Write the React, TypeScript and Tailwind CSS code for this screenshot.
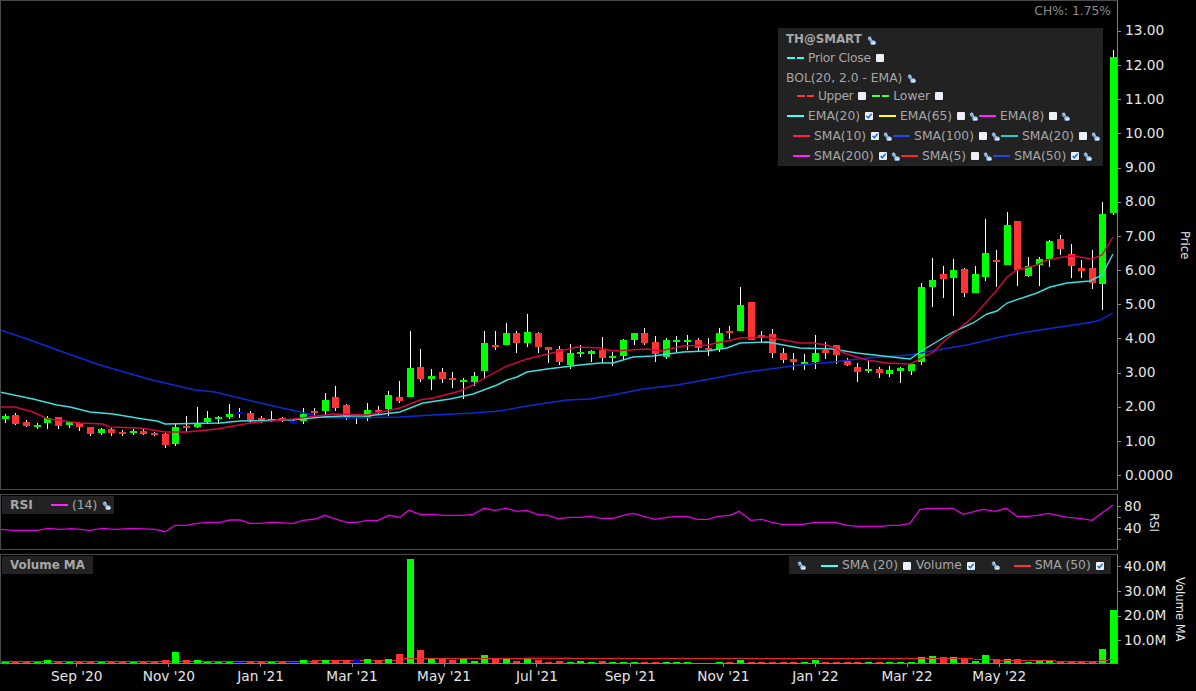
type Candle = [number, number, number, number, string];

// hi, body top, body bottom, lo, colour (page pixels)
const candles: Candle[] = [
  [414, 416, 419, 423, "g"], [413, 415, 424, 425, "r"], [420, 422, 426, 427, "r"], [423, 425, 427, 429, "g"],
  [416, 418, 423, 429, "g"], [417, 417, 426, 429, "r"], [421, 422, 425, 428, "g"], [422, 423, 427, 431, "r"],
  [427, 427, 434, 436, "r"], [428, 429, 433, 435, "g"], [428, 429, 433, 436, "r"], [430, 432, 434, 436, "r"],
  [429, 431, 433, 435, "g"], [429, 431, 434, 435, "r"], [432, 433, 435, 436, "r"], [433, 434, 445, 448, "r"],
  [424, 427, 444, 446, "g"], [416, 426, 428, 432, "r"], [407, 423, 427, 428, "g"], [411, 418, 422, 424, "g"],
  [416, 417, 419, 424, "g"], [404, 414, 417, 419, "g"], [408, 412, 414, 418, "b"], [411, 413, 420, 423, "r"],
  [416, 418, 420, 423, "r"], [411, 419, 420, 422, "g"], [417, 418, 420, 422, "r"], [420, 421, 423, 423, "b"],
  [408, 414, 421, 424, "g"], [408, 411, 413, 415, "r"], [393, 400, 411, 415, "g"], [386, 397, 408, 411, "r"],
  [404, 405, 418, 420, "r"], [417, 417, 418, 424, "b"], [403, 410, 418, 421, "g"], [406, 410, 412, 415, "r"],
  [391, 395, 409, 416, "g"], [381, 397, 401, 403, "r"], [331, 368, 397, 397, "g"], [349, 367, 379, 382, "r"],
  [369, 376, 379, 390, "g"], [368, 372, 379, 383, "r"], [372, 378, 380, 388, "r"], [378, 380, 382, 399, "g"],
  [372, 376, 382, 386, "g"], [331, 343, 371, 379, "g"], [331, 345, 347, 350, "r"], [323, 333, 345, 345, "g"],
  [331, 333, 343, 353, "r"], [314, 332, 343, 347, "g"], [332, 333, 347, 353, "r"], [347, 347, 350, 363, "r"],
  [346, 349, 362, 365, "r"], [344, 353, 365, 369, "g"], [345, 352, 354, 357, "g"], [350, 351, 354, 362, "g"],
  [337, 350, 358, 363, "r"], [352, 356, 358, 366, "g"], [339, 340, 356, 360, "g"], [333, 333, 340, 345, "g"],
  [328, 333, 343, 345, "r"], [336, 342, 354, 362, "r"], [338, 340, 357, 359, "g"], [336, 340, 342, 352, "g"],
  [335, 340, 342, 350, "g"], [338, 340, 348, 351, "r"], [338, 348, 350, 356, "r"], [328, 333, 349, 352, "g"],
  [326, 331, 333, 339, "r"], [287, 305, 331, 331, "g"], [302, 302, 340, 340, "r"], [331, 335, 338, 343, "r"],
  [329, 334, 353, 358, "r"], [348, 353, 360, 363, "r"], [353, 359, 362, 370, "r"], [354, 362, 364, 370, "g"],
  [335, 353, 362, 369, "g"], [342, 350, 353, 359, "r"], [345, 345, 355, 364, "r"], [358, 361, 365, 366, "r"],
  [363, 367, 372, 382, "r"], [360, 369, 371, 373, "g"], [367, 369, 373, 378, "r"], [366, 370, 374, 377, "g"],
  [367, 368, 371, 383, "g"], [363, 364, 371, 375, "g"], [283, 287, 362, 365, "g"], [258, 280, 287, 307, "g"],
  [266, 274, 279, 298, "r"], [259, 270, 278, 316, "g"], [268, 269, 293, 297, "r"], [266, 274, 293, 293, "g"],
  [219, 253, 277, 281, "g"], [250, 260, 262, 287, "r"], [212, 225, 265, 265, "g"], [221, 221, 270, 286, "r"],
  [257, 266, 276, 277, "g"], [257, 259, 265, 286, "g"], [240, 241, 259, 267, "g"], [235, 239, 249, 255, "r"],
  [244, 254, 266, 278, "r"], [260, 268, 271, 278, "r"], [250, 268, 283, 289, "r"], [202, 214, 284, 310, "g"],
  [50, 57, 213, 215, "g"],
];

const volumes = [
  1, 1, 1, 1, 3, 1, 1, 1, 1, 1, 1, 1, 1, 1, 1, 3, 11, 3, 3, 1, 1, 1, 1, 1, 1, 1, 1, 1, 3, 2, 3, 3, 3, 4, 4, 3, 4, 9,
  104, 13, 4, 5, 3, 4, 2, 8, 5, 4, 2, 4, 3, 1, 2, 1, 2, 1, 2, 1, 1, 1, 1, 1, 1, 1, 1, 0, 0, 1, 1, 3, 1, 1, 1, 1, 1, 1,
  3, 1, 1, 1, 1, 1, 1, 1, 1, 1, 6, 7, 6, 6, 4, 2, 8, 4, 4, 4, 1, 2, 2, 1, 1, 1, 1, 14, 53,
];

const blueLine = [[0, 330], [30, 340], [60, 351], [100, 365], [152, 380], [195, 390], [215, 392], [260, 403], [300, 412], [320, 417], [347, 418], [400, 417], [433, 415], [473, 413], [500, 411], [527, 406], [567, 400], [590, 399], [613, 395], [643, 389], [677, 385], [710, 379], [747, 372], [770, 369], [800, 365], [833, 362], [867, 358], [910, 355], [943, 349], [967, 345], [1000, 337], [1027, 332], [1060, 327], [1093, 322], [1100, 320], [1113, 313]];

const cyanLine = [[0, 392], [33, 399], [57, 405], [70, 407], [90, 412], [113, 414], [143, 419], [157, 421], [165, 424], [220, 423], [240, 421], [290, 420], [323, 417], [343, 416], [367, 416], [400, 412], [423, 403], [450, 399], [473, 394], [497, 385], [507, 380], [517, 377], [527, 372], [547, 369], [580, 365], [600, 363], [613, 363], [633, 357], [653, 356], [683, 352], [707, 351], [727, 348], [740, 343], [767, 342], [800, 348], [833, 349], [857, 353], [883, 356], [910, 359], [923, 350], [943, 338], [953, 332], [973, 323], [987, 314], [997, 311], [1007, 303], [1037, 293], [1050, 287], [1067, 283], [1090, 281], [1102, 275], [1113, 254]];

const redLine = [[0, 407], [15, 407], [33, 412], [48, 419], [80, 423], [103, 424], [110, 427], [140, 428], [165, 432], [187, 432], [217, 429], [250, 423], [293, 419], [333, 414], [367, 415], [400, 408], [420, 400], [433, 398], [460, 391], [473, 385], [490, 375], [507, 366], [527, 359], [577, 347], [600, 348], [613, 351], [647, 349], [660, 351], [683, 346], [707, 345], [727, 341], [740, 338], [767, 337], [800, 343], [813, 343], [827, 345], [847, 354], [867, 360], [887, 363], [910, 364], [933, 352], [943, 342], [973, 317], [997, 290], [1007, 277], [1017, 270], [1037, 265], [1047, 260], [1063, 257], [1073, 256], [1092, 259], [1102, 255], [1113, 237]];

const rsiLine = [[0, 529.3], [13, 530.3], [37, 530.3], [48, 528.3], [60, 529.3], [72, 528.7], [90, 530.3], [102, 528.3], [115, 529.3], [133, 528.3], [155, 529.3], [165, 531.7], [175, 525.3], [187, 525.3], [197, 523.3], [208, 522.3], [220, 522.3], [230, 520], [240, 520], [250, 523.3], [260, 523.3], [272, 522.3], [293, 523.3], [303, 520.3], [315, 519], [325, 515.3], [335, 519], [347, 522.3], [357, 522.3], [367, 520.3], [378, 520.3], [389, 515.3], [400, 517.3], [409, 510.3], [420, 514.3], [433, 514.3], [443, 515.3], [463, 515.3], [473, 514.3], [484, 508.3], [495, 510.3], [506, 508.3], [517, 511.3], [527, 510.3], [537, 514.3], [548, 515.3], [558, 518.7], [570, 517.3], [580, 517.3], [590, 516.3], [602, 518.3], [613, 518.3], [623, 515.3], [633, 513.3], [655, 519.3], [667, 517.3], [677, 516.3], [687, 516.3], [697, 519.3], [708, 519.3], [718, 516.3], [730, 515.3], [739, 511.3], [751, 520.3], [762, 519.3], [772, 522.3], [782, 524.3], [803, 524.3], [815, 522.3], [835, 522.3], [847, 525.3], [858, 526.3], [880, 526.3], [890, 525.3], [900, 525.3], [910, 523.3], [920, 509.3], [930, 508.3], [953, 508.3], [963, 514.3], [983, 509.3], [995, 511.3], [1006, 508.3], [1017, 516.3], [1028, 516.3], [1037, 515.3], [1048, 513.3], [1068, 517.3], [1080, 518.3], [1092, 520.3], [1113, 505]];

const volLine = [[0, 661.5], [300, 661.5], [325, 660.5], [363, 660.5], [397, 660], [408, 658.5], [960, 658.5], [1000, 660], [1050, 660], [1058, 661.5], [1095, 661.5], [1113, 659.5]];

const xLabels = [
  { label: "Sep '20", x: 76.7 }, { label: "Nov '20", x: 168.7 }, { label: "Jan '21", x: 261.3 }, { label: "Mar '21", x: 351.3 },
  { label: "May '21", x: 444.3 }, { label: "Jul '21", x: 536.3 }, { label: "Sep '21", x: 631 }, { label: "Nov '21", x: 723 },
  { label: "Jan '22", x: 816.3 }, { label: "Mar '22", x: 906.5 }, { label: "May '22", x: 999.3 },
];

const priceLabels = ["13.00", "12.00", "11.00", "10.00", "9.00", "8.00", "7.00", "6.00", "5.00", "4.00", "3.00", "2.00", "1.00", "0.0000"];
const candleFill: Record<string, string> = { g: "#00ff00", r: "#ff3333", b: "#0000dd" };

const barLeft = (i: number) => Math.round(5.3 + 10.657 * i - 3.5);
const pts = (line: number[][]) => line.map((p) => p.join(",")).join(" ");

function Wrench() {
  return (
    <svg viewBox="0 0 10 10" className="block h-[9px] w-[9px] shrink-0">
      <path d="M1 1 3.8.6 5 2.4 5.4 4.6 8.8 5.2 10 7.4 9 9.8H4.4L3.4 6 1 3.6z" fill="#aed0f4" />
      <path d="M1 1.6 3.6 4.2 4.4 6.6" fill="none" stroke="#2d5c94" strokeWidth="0.9" />
      <path d="M6 7.6H8.6V8.8H6z" fill="#ffffff" />
    </svg>
  );
}

function Box({ checked }: { checked?: boolean }) {
  return (
    <span className="flex h-[8px] w-[8px] shrink-0 items-center justify-center rounded-[1px] bg-[#eeeef8]">
      {checked && (
        <svg viewBox="0 0 8 8" className="h-[8px] w-[8px]">
          <path d="M1.6 4 3.3 5.8 6.6 1.8" fill="none" stroke="#1a6fdc" strokeWidth="1.5" />
        </svg>
      )}
    </span>
  );
}

function Swatch({ color }: { color: string }) {
  return <span className="block h-[2px] w-[17px] shrink-0" style={{ backgroundColor: color }} />;
}

function Dash({ color }: { color: string }) {
  return (
    <span className="flex w-[17px] shrink-0 justify-between">
      <span className="h-[2px] w-[8px]" style={{ backgroundColor: color }} />
      <span className="h-[2px] w-[7px]" style={{ backgroundColor: color }} />
    </span>
  );
}

function Item({ color, label, checked, wrench = true }: { color: string; label: string; checked?: boolean; wrench?: boolean }) {
  return (
    <>
      <Swatch color={color} />
      <span className="ml-[4px]">{label}</span>
      <span className="ml-[5px]">
        <Box checked={checked} />
      </span>
      {wrench ? (
        <span className="ml-[4px] mr-[1px]">
          <Wrench />
        </span>
      ) : (
        <span className="w-[6px]" />
      )}
    </>
  );
}

function Legend() {
  return (
    <div className="absolute left-[777px] top-[27px] flex w-[325px] flex-col bg-[#222222] pb-[1px] pt-[3px] text-[12.3px] text-[#a6a6a6]">
      <div className="flex h-[18px] items-center pl-[8px]">
        <b className="text-[11.8px] font-bold">TH@SMART</b>
        <span className="ml-[5px]"><Wrench /></span>
      </div>
      <div className="flex h-[18px] items-center pl-[9px]">
        <Dash color="#33ffff" />
        <span className="ml-[4px] tracking-[-0.27px]">Prior Close</span>
        <span className="ml-[5px]"><Box /></span>
      </div>
      <div className="mt-[2px] flex h-[18px] items-center pl-[8px]">
        <span>BOL(20, 2.0 - EMA)</span>
        <span className="ml-[5px]"><Wrench /></span>
      </div>
      <div className="flex h-[18px] items-center pl-[19px]">
        <Dash color="#ff3333" />
        <span className="ml-[4px] tracking-[-0.4px]">Upper</span>
        <span className="ml-[5px]"><Box /></span>
        <span className="ml-[6px]"><Dash color="#44ff44" /></span>
        <span className="ml-[4px]">Lower</span>
        <span className="ml-[5px]"><Box /></span>
      </div>
      <div className="mt-[2px] flex h-[18px] items-center pl-[9px]">
        <Item color="#44ffff" label="EMA(20)" checked wrench={false} />
        <Item color="#ffff22" label="EMA(65)" />
        <Item color="#ff22ff" label="EMA(8)" />
      </div>
      <div className="mt-[2px] flex h-[18px] items-center pl-[15px]">
        <Item color="#ff2244" label="SMA(10)" checked />
        <Item color="#2244ee" label="SMA(100)" />
        <Item color="#22cccc" label="SMA(20)" />
      </div>
      <div className="mt-[2px] flex h-[18px] items-center pl-[15px]">
        <Item color="#ff22ff" label="SMA(200)" checked />
        <Item color="#ff2222" label="SMA(5)" />
        <Item color="#2244ee" label="SMA(50)" checked />
      </div>
    </div>
  );
}

function PriceChart() {
  return (
    <div className="relative h-[490px] w-[1118px] border border-[#4a4a4a] border-r-[#808080]">
      <svg viewBox="1 1 1116 488" className="block h-[488px] w-[1116px]">
        <g shapeRendering="crispEdges">
          {candles.map(([hi, top, bot, lo, c], i) => (
            <g key={i}>
              <rect x={barLeft(i) + 3} y={hi} width="1" height={lo - hi} fill="#ffffff" />
              <rect x={barLeft(i)} y={top} width="7" height={bot - top} fill={candleFill[c]} />
            </g>
          ))}
        </g>
        <polyline points={pts(blueLine)} fill="none" stroke="#0b2bd6" strokeWidth="1.4" />
        <polyline points={pts(cyanLine)} fill="none" stroke="#3fdede" strokeWidth="1.4" />
        <polyline points={pts(redLine)} fill="none" stroke="#d6063f" strokeWidth="1.4" />
      </svg>
      <span className="absolute right-[6px] top-[1px] text-[12.3px] text-[#8c8c8c]">CH%: 1.75%</span>
      <Legend />
    </div>
  );
}

function AxisRow({ label, rowClass, tickClass = "ml-[4px]" }: { label: string; rowClass: string; tickClass?: string }) {
  return (
    <div className={`flex shrink-0 items-center ${rowClass}`}>
      <span className="h-px w-[3px] bg-[#8a8a8a]" />
      <span className={`leading-none ${tickClass}`}>{label}</span>
    </div>
  );
}

export default function App() {
  const first = xLabels[1].x - xLabels[0].x;
  return (
    <div className="h-[691px] w-[1196px] overflow-hidden bg-black font-['DejaVu_Sans',sans-serif] text-[13.7px] text-[#e6e6e6]">
      <div className="flex">
        <PriceChart />
        <div className="h-[490px] w-[58px] shrink-0 pt-[14.2px]">
          {priceLabels.map((p) => (
            <AxisRow key={p} label={p} rowClass="h-[34.2px]" />
          ))}
        </div>
        <div className="flex w-[16px] items-center justify-center text-[11.6px] [writing-mode:vertical-rl]">Price</div>
      </div>

      <div className="mt-[4px] flex">
        <div className="relative h-[56px] w-[1118px] border border-[#4a4a4a] border-r-[#808080]">
          <svg viewBox="1 495 1116 54" className="block h-[54px] w-[1116px]">
            <polyline points={pts(rsiLine)} fill="none" stroke="#e000e0" strokeWidth="1.3" />
          </svg>
          <div className="absolute left-[1px] top-[1px] flex h-[18px] w-[112px] items-center bg-[#222222] pl-[8px] text-[12.3px] text-[#a6a6a6]">
            <b className="w-[41px] font-bold">RSI</b>
            <Swatch color="#ff22ff" />
            <span className="ml-[4px]">(14)</span>
            <span className="ml-[5px]"><Wrench /></span>
          </div>
        </div>
        <div className="h-[56px] w-[27px] shrink-0 pt-[7.4px]">
          {["80", "", "40", ""].map((t, i) => (
            <AxisRow key={i} label={t} rowClass="h-[10.8px]" tickClass="ml-[3px]" />
          ))}
        </div>
        <div className="flex w-[16px] items-center justify-center text-[11.6px] [writing-mode:vertical-rl]">RSI</div>
      </div>

      <div className="mt-[4px] flex">
        <div className="relative h-[110px] w-[1118px] border border-[#4a4a4a] border-b-[#808080] border-r-[#808080]">
          <svg viewBox="1 555 1116 108" className="block h-[108px] w-[1116px]">
            <polyline points={pts(volLine)} fill="none" stroke="#e82626" strokeWidth="1" shapeRendering="crispEdges" />
            <path d="M525 657.5Q547 656 570 657.5" fill="none" stroke="#5a1616" strokeWidth="1" />
            <g shapeRendering="crispEdges">
              {volumes.map((h, i) => (
                <rect key={i} x={barLeft(i)} y={663 - h} width="7" height={h} fill={candleFill[candles[i][4]]} />
              ))}
            </g>
            <polyline points={pts(volLine.slice(5))} fill="none" stroke="#e82626" strokeWidth="1" shapeRendering="crispEdges" />
          </svg>
          <div className="absolute left-[1px] top-[1px] flex h-[18px] w-[91px] items-center bg-[#222222] pl-[8px] pt-[1px] text-[11.9px] font-bold text-[#a6a6a6]">
            Volume MA
          </div>
          <div className="absolute right-[6px] top-[1px] flex h-[18px] w-[322px] items-center bg-[#222222] pl-[8px] pt-[1px] text-[12.3px] text-[#a6a6a6]">
            <Wrench />
            <span className="ml-[15px]"><Swatch color="#44ffff" /></span>
            <span className="ml-[4px]">SMA (20)</span>
            <span className="ml-[5px]"><Box /></span>
            <span className="ml-[5px]">Volume</span>
            <span className="ml-[5px]"><Box checked /></span>
            <span className="ml-[16px]"><Wrench /></span>
            <span className="ml-[14px]"><Swatch color="#ff3333" /></span>
            <span className="ml-[4px]">SMA (50)</span>
            <span className="ml-[5px]"><Box checked /></span>
          </div>
        </div>
        <div className="h-[110px] w-[53px] shrink-0 pt-[0.6px]">
          {["40.0M", "30.0M", "20.0M", "10.0M"].map((t) => (
            <AxisRow key={t} label={t} rowClass="h-[24.6px]" tickClass="ml-[3px]" />
          ))}
        </div>
        <div className="flex w-[16px] items-center justify-center text-[11.6px] [writing-mode:vertical-rl]">Volume MA</div>
      </div>

      <div className="flex" style={{ paddingLeft: xLabels[0].x - first / 2 }}>
        {xLabels.map((l, i) => {
          const prev = i > 0 ? xLabels[i - 1].x : l.x - first;
          const next = i < xLabels.length - 1 ? xLabels[i + 1].x : l.x + (l.x - prev);
          return (
            <div key={l.label} className="flex shrink-0 flex-col items-center" style={{ width: (next - prev) / 2 }}>
              <span className="h-[3px] w-px bg-[#8a8a8a]" />
              <span className="mt-[1px] whitespace-nowrap leading-[16px]">{l.label}</span>
            </div>
          );
        })}
      </div>
    </div>
  );
}
